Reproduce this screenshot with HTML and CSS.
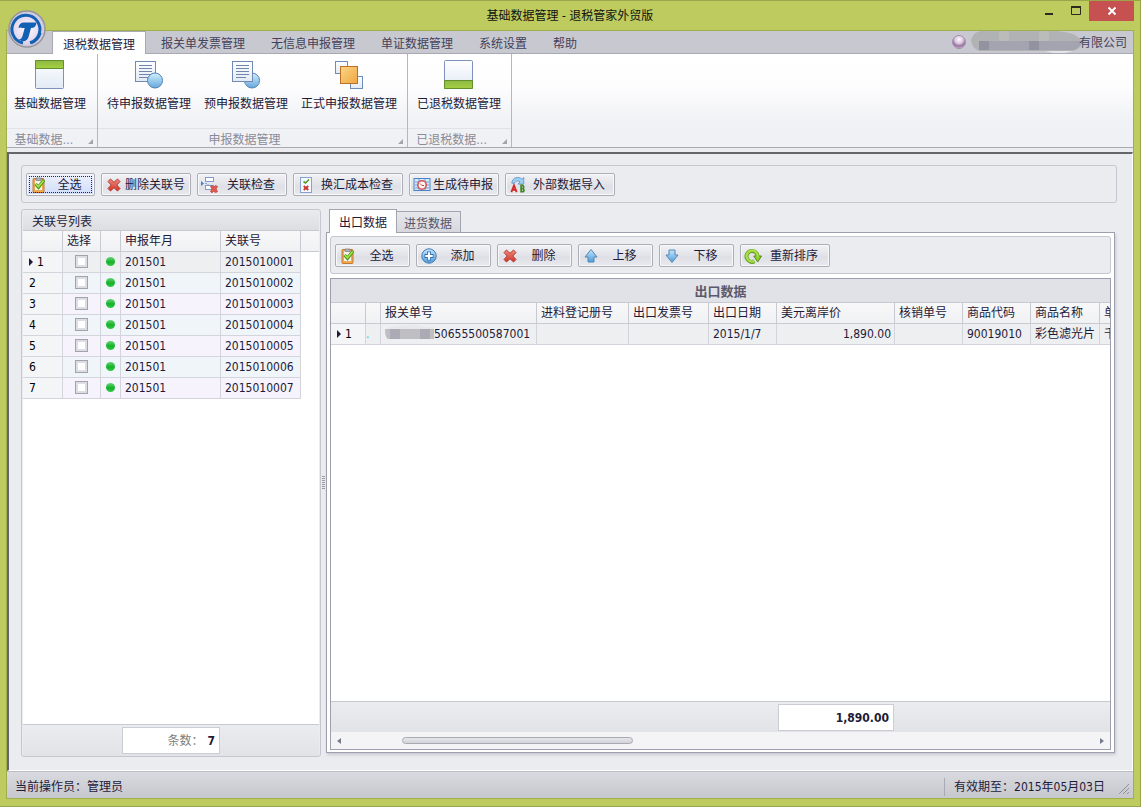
FILE: index.html
```html
<!DOCTYPE html>
<html lang="zh-CN">
<head>
<meta charset="utf-8">
<title>基础数据管理 - 退税管家外贸版</title>
<link rel="stylesheet" href="styles.css">
</head>
<body>
<svg class="sprite" aria-hidden="true">
  <defs>
    <linearGradient id="g-paper" x1="0" y1="0" x2="0" y2="1"><stop offset="0" stop-color="#fdfeff"/><stop offset="1" stop-color="#e3eaf5"/></linearGradient>
    <linearGradient id="g-green" x1="0" y1="0" x2="0" y2="1"><stop offset="0" stop-color="#8eb944"/><stop offset="1" stop-color="#a5d040"/></linearGradient>
    <linearGradient id="g-ball" x1="0" y1="0" x2="0" y2="1"><stop offset="0" stop-color="#d3effc"/><stop offset="1" stop-color="#64a8dc"/></linearGradient>
    <linearGradient id="g-orange" x1="0" y1="0" x2="1" y2="1"><stop offset="0" stop-color="#fbd583"/><stop offset="1" stop-color="#f0a742"/></linearGradient>
    <linearGradient id="g-red" x1="0" y1="0" x2="0" y2="1"><stop offset="0" stop-color="#f08b80"/><stop offset="1" stop-color="#cf3427"/></linearGradient>
    <linearGradient id="g-blue" x1="0" y1="0" x2="0" y2="1"><stop offset="0" stop-color="#c4e6fb"/><stop offset="1" stop-color="#4e9cdc"/></linearGradient>
    <radialGradient id="g-orb" cx=".5" cy=".3" r=".7"><stop offset="0" stop-color="#fffaff"/><stop offset=".45" stop-color="#d8c6de"/><stop offset=".75" stop-color="#93719c"/><stop offset="1" stop-color="#d9bfe0"/></radialGradient>
    <radialGradient id="g-logo"><stop offset="0" stop-color="#fffaff"/><stop offset=".7" stop-color="#e4d9ef"/><stop offset="1" stop-color="#c9c4d8"/></radialGradient>
  </defs>
  <symbol id="i-clip" viewBox="0 0 16 16"><rect x="2" y="1.500" width="11" height="14" rx="1" fill="#f0a850" stroke="#c27a34"/><path d="M4 3h7v10H4z" fill="#f7f3ea"/><path d="M5 1h5v2.500H5z" fill="#b4b5ba" stroke="#77787e" stroke-width=".7"/><path d="M4.500 7l3 3.200L13 3" fill="none" stroke="#3f8f12" stroke-width="3.200"/><path d="M4.800 7.200l2.700 2.600L12.700 3.500" fill="none" stroke="#a6e54c" stroke-width="1.700"/></symbol>
  <symbol id="i-x" viewBox="0 0 16 16"><path d="M2 4.500L4.500 2 8 5.300 11.500 2 14 4.500 10.800 8 14 11.500 11.500 14 8 10.700 4.500 14 2 11.500 5.200 8z" fill="url(#g-red)" stroke="#b63a31" stroke-linejoin="round"/></symbol>
  <symbol id="i-link" viewBox="0 0 18 16"><path d="M0 4l3 2.500L0 9z" fill="#3f82cf"/><path d="M4 6.500h2M7 7v4" fill="none" stroke="#8fa3bf"/><rect x="4.500" y=".5" width="8" height="4" fill="#fff" stroke="#7f9bc7"/><rect x="4.500" y="8.500" width="8" height="4" fill="#fff" stroke="#7f9bc7"/><path d="M9.500 9.500l1.500-1 1.800 1.700 1.700-1.700 2 1-1.500 2.500 1.500 2.500-2 1.300-1.700-1.600-1.800 1.600-1.500-1.300 1.500-2.500z" fill="#e15a52" stroke="#b53a32" stroke-width=".7"/></symbol>
  <symbol id="i-check" viewBox="0 0 16 16"><rect x="2.500" y=".5" width="11" height="15" fill="#f5f9ff" stroke="#88a2d0"/><path d="M5.500 4.500l2 1.500 3.500-3.500" fill="none" stroke="#4f9a1c" stroke-width="1.600"/><path d="M5.700 9l4.600 4M10.300 9l-4.600 4" stroke="#c8342c" stroke-width="1.800"/></symbol>
  <symbol id="i-gen" viewBox="0 0 18 16"><rect x="1" y="1.500" width="16" height="12" fill="#d5e9fb" stroke="#4b83c7"/><path d="M2 5h14M2 8h14M2 11h14M6 2v11M12 2v11" stroke="#6fa3da"/><circle cx="9" cy="8" r="4.200" fill="#fff2f0" stroke="#d35450" stroke-width="1.600"/><path d="M7 6.500l2 2h2" fill="none" stroke="#b94442"/></symbol>
  <symbol id="i-import" viewBox="0 0 18 18"><path d="M2 7C2.500 0 10-1 13.500 2.500L15.500.5V8H9l2.200-2.500C9 3.500 6 4.500 5 7z" fill="#9fd0f3" stroke="#4c87bd" stroke-width=".8"/><path d="M1.500 17L4.500 9.500 7.500 17M3 14.500h3.500" fill="none" stroke="#cf2622" stroke-width="2"/><path d="M12.500 9.500v7h2.500q1.800-1.800-.7-3.500 2.200-1.800 0-3.500z" fill="none" stroke="#3e8420" stroke-width="1.900"/></symbol>
  <symbol id="i-add" viewBox="0 0 16 16"><circle cx="8" cy="8" r="7.200" fill="url(#g-blue)" stroke="#4179b5"/><path d="M8 3.500v9M3.500 8h9" stroke="#3470ad" stroke-width="4"/><path d="M8 4.300v7.400M4.300 8h7.400" stroke="#fff" stroke-width="2.200"/></symbol>
  <symbol id="i-up" viewBox="0 0 16 16"><path d="M8 1.500L14 9h-3v5H5V9H2z" fill="url(#g-blue)" stroke="#5386b7" stroke-linejoin="round"/></symbol>
  <symbol id="i-down" viewBox="0 0 16 16"><path d="M8 14.500L2 7h3V2h6v5h3z" fill="url(#g-blue)" stroke="#5386b7" stroke-linejoin="round"/></symbol>
  <symbol id="i-sort" viewBox="0 0 18 16"><path d="M10.500 13.300A5.500 5.500 0 1 1 13.500 8" fill="none" stroke="#639b1d" stroke-width="4"/><path d="M9.800 8h7.700l-3.800 6z" fill="#8fcd2d" stroke="#568d18"/><path d="M10.300 13.100A5.500 5.500 0 1 1 13.500 9" fill="none" stroke="#a8df48" stroke-width="2.400"/></symbol>
  <symbol id="i-top" viewBox="0 0 32 32"><rect x="1.500" y="1.500" width="28" height="28" rx="1" fill="url(#g-paper)" stroke="#7f92bd"/><path d="M1.500 1.500h28v8h-28z" fill="url(#g-green)" stroke="#62902f"/></symbol>
  <symbol id="i-bottom" viewBox="0 0 32 32"><rect x="1.500" y="1.500" width="28" height="28" rx="1" fill="url(#g-paper)" stroke="#7f92bd"/><path d="M1.500 21.500h28v8h-28z" fill="url(#g-green)" stroke="#62902f"/></symbol>
  <symbol id="i-page" viewBox="0 0 32 32"><rect x="2.500" y="2.500" width="20" height="20" fill="url(#g-paper)" stroke="#7089b5"/><path d="M6 6.500h13M6 9.500h13M6 12.500h13M6 15.500h13M6 18.500h10" stroke="#7185ad"/></symbol>
  <symbol id="i-ball" viewBox="0 0 32 32"><circle cx="22" cy="21.500" r="7.500" fill="url(#g-ball)" stroke="#5182b8"/></symbol>
  <symbol id="i-stack" viewBox="0 0 32 32"><rect x="2.500" y="2.500" width="12" height="12" fill="url(#g-paper)" stroke="#6b8dba"/><rect x="17.500" y="17.500" width="12" height="12" fill="url(#g-paper)" stroke="#6b8dba"/><rect x="7.500" y="7.500" width="17" height="17" fill="url(#g-orange)" stroke="#bd7128"/></symbol>
</svg>

<div class="window">
  <header class="titlebar">
    <h1 class="title">基础数据管理 - 退税管家外贸版</h1>
    <div class="window-controls">
      <button class="ctl" aria-label="最小化"><svg width="12" height="12"><path d="M2 9h8" stroke="#2a2a20" stroke-width="2"/></svg></button>
      <button class="ctl" aria-label="最大化"><svg width="12" height="12"><path d="M1.500 2h9v7.500h-9z" fill="none" stroke="#2a2a20"/><path d="M1 2h10" stroke="#2a2a20" stroke-width="2"/></svg></button>
      <button class="ctl ctl-close" aria-label="关闭"><svg width="12" height="12"><path d="M2.500 2.500l7 7M9.500 2.500l-7 7" stroke="#fff" stroke-width="2"/></svg></button>
    </div>
  </header>

  <div class="client">
    <svg class="logo" viewBox="0 0 40 40" role="img" aria-label="退税管家"><circle cx="20" cy="20" r="18" fill="url(#g-logo)" stroke="#96969c" stroke-width="1.500"/><path d="M16 34A14 14 0 1 1 23 33.700" fill="none" stroke="#1261b2" stroke-width="3"/><path d="M24 34q7-2 9.500-10" fill="none" stroke="#1261b2" stroke-width="2.500"/><path d="M11.500 19q.5-5.500 5.500-5.500h12.500q-.5 5.500-5.500 5.500l-2.500 9q-1.500 5-7 4l-3-1.500q3 0 4-3.500l2.200-8h-2.200q-2-1.200-4 0z" fill="#1261b2"/></svg>
    <nav class="tabs">
      <button class="tab tab-active">退税数据管理</button>
      <button class="tab">报关单发票管理</button>
      <button class="tab">无信息申报管理</button>
      <button class="tab">单证数据管理</button>
      <button class="tab">系统设置</button>
      <button class="tab">帮助</button>
      <div class="account">
        <svg width="14" height="14" viewBox="0 0 14 14"><circle cx="7" cy="7" r="6.500" fill="url(#g-orb)" stroke="#a78cae"/></svg>
        <svg class="redaction" width="112" height="22" viewBox="0 0 112 22"><path d="M0 9Q2 1 10 0h74q24 1 27 12-2 7-11 8H8Q1 17 0 9z" fill="#b1b2b3"/><path d="M8 10h102q0 7-8 9H8z" fill="#a3a4af"/><path d="M8 10h10v9H8zM58 10h10v9H58z" fill="#9193a0"/><path d="M28 0h10v10H28zM68 0h10v10H68z" fill="#bbbcb9"/><path d="M74 20h28l-8 2H82z" fill="#e5e5e8"/></svg>
        <span>有限公司</span>
      </div>
    </nav>

    <div class="ribbon">
      <section class="group group-first">
        <div class="group-items"><button class="big"><svg class="i32"><use href="#i-top"/></svg>基础数据管理</button></div>
        <div class="group-name"><span>基础数据…</span></div>
      </section>
      <section class="group">
        <div class="group-items">
          <button class="big"><svg class="i32"><use href="#i-page"/><use href="#i-ball"/></svg>待申报数据管理</button>
          <button class="big"><svg class="i32"><use href="#i-ball"/><use href="#i-page"/></svg>预申报数据管理</button>
          <button class="big"><svg class="i32"><use href="#i-stack"/></svg>正式申报数据管理</button>
        </div>
        <div class="group-name"><span>申报数据管理</span></div>
      </section>
      <section class="group">
        <div class="group-items"><button class="big"><svg class="i32"><use href="#i-bottom"/></svg>已退税数据管理</button></div>
        <div class="group-name"><span>已退税数据…</span></div>
      </section>
    </div>

    <main class="workspace">
      <div class="toolbar">
        <button class="btn btn-focus w-small"><svg><use href="#i-clip"/></svg><span>全选</span></button>
        <button class="btn w-wide"><svg><use href="#i-x"/></svg><span>删除关联号</span></button>
        <button class="btn w-wide"><svg><use href="#i-link"/></svg><span>关联检查</span></button>
        <button class="btn w-xwide"><svg><use href="#i-check"/></svg><span>换汇成本检查</span></button>
        <button class="btn w-wide"><svg><use href="#i-gen"/></svg><span>生成待申报</span></button>
        <button class="btn w-xwide"><svg><use href="#i-import"/></svg><span>外部数据导入</span></button>
      </div>

      <div class="split">
        <section class="list-panel">
          <h2 class="list-title">关联号列表</h2>
          <div class="list-body">
            <table class="grid list-grid">
              <colgroup><col class="c40"><col class="c38"><col class="c20"><col class="c100"><col class="c80"><col></colgroup>
              <thead><tr><th></th><th>选择</th><th></th><th>申报年月</th><th>关联号</th><th></th></tr></thead>
              <tbody>
                <tr class="current"><td class="num"><i class="arrow"></i>1</td><td class="mid"><input type="checkbox" aria-label="选择 1"></td><td class="mid"><i class="dot"></i></td><td>201501</td><td>2015010001</td><td class="blank"></td></tr>
                <tr><td class="num">2</td><td class="mid"><input type="checkbox" aria-label="选择 2"></td><td class="mid"><i class="dot"></i></td><td>201501</td><td>2015010002</td><td class="blank"></td></tr>
                <tr><td class="num">3</td><td class="mid"><input type="checkbox" aria-label="选择 3"></td><td class="mid"><i class="dot"></i></td><td>201501</td><td>2015010003</td><td class="blank"></td></tr>
                <tr><td class="num">4</td><td class="mid"><input type="checkbox" aria-label="选择 4"></td><td class="mid"><i class="dot"></i></td><td>201501</td><td>2015010004</td><td class="blank"></td></tr>
                <tr><td class="num">5</td><td class="mid"><input type="checkbox" aria-label="选择 5"></td><td class="mid"><i class="dot"></i></td><td>201501</td><td>2015010005</td><td class="blank"></td></tr>
                <tr><td class="num">6</td><td class="mid"><input type="checkbox" aria-label="选择 6"></td><td class="mid"><i class="dot"></i></td><td>201501</td><td>2015010006</td><td class="blank"></td></tr>
                <tr><td class="num">7</td><td class="mid"><input type="checkbox" aria-label="选择 7"></td><td class="mid"><i class="dot"></i></td><td>201501</td><td>2015010007</td><td class="blank"></td></tr>
              </tbody>
            </table>
          </div>
          <div class="list-foot"><div class="sum"><span>条数：</span><b>7</b></div></div>
        </section>

        <div class="splitter"><i></i></div>

        <section class="detail">
          <div class="detail-tabs">
            <button class="dtab dtab-active">出口数据</button>
            <button class="dtab">进货数据</button>
          </div>
          <div class="detail-body">
            <div class="toolbar toolbar-inner">
              <button class="btn w-mid"><svg><use href="#i-clip"/></svg><span>全选</span></button>
              <button class="btn w-mid"><svg><use href="#i-add"/></svg><span>添加</span></button>
              <button class="btn w-mid"><svg><use href="#i-x"/></svg><span>删除</span></button>
              <button class="btn w-mid"><svg><use href="#i-up"/></svg><span>上移</span></button>
              <button class="btn w-mid"><svg><use href="#i-down"/></svg><span>下移</span></button>
              <button class="btn w-wide"><svg><use href="#i-sort"/></svg><span>重新排序</span></button>
            </div>
            <div class="data-panel">
              <h2 class="band">出口数据</h2>
              <div class="data-body">
                <table class="grid data-grid">
                  <colgroup><col class="c35"><col class="c15"><col class="c156"><col class="c92"><col class="c80"><col class="c68"><col class="c118"><col class="c68"><col class="c68"><col class="c69"><col></colgroup>
                  <thead><tr><th></th><th></th><th>报关单号</th><th>进料登记册号</th><th>出口发票号</th><th>出口日期</th><th>美元离岸价</th><th>核销单号</th><th>商品代码</th><th>商品名称</th><th>单</th></tr></thead>
                  <tbody><tr class="current"><td class="num"><i class="arrow"></i>1</td><td class="sliver">.</td><td class="decl"><svg width="49" height="16" viewBox="0 0 49 16"><path d="M1 5Q2 0 30 0l12 2h7v12H6Q0 14 1 5z" fill="#e8e8ea"/><path d="M0 4h49v10H3Q0 13 0 4z" fill="#bfbfc3"/><path d="M5 4h10v10H5zM35 4h10v10H35z" fill="#abaab5"/></svg>50655500587001</td><td></td><td></td><td>2015/1/7</td><td class="amount">1,890.00</td><td></td><td>90019010</td><td>彩色滤光片</td><td>千</td></tr></tbody>
                </table>
              </div>
              <div class="data-foot"><div class="sum sum-amount"><b>1,890.00</b></div></div>
              <div class="scrollbar">
                <button aria-label="向左滚动"><svg width="4" height="8"><path d="M4 1v6L0 4z" fill="#777b8c"/></svg></button>
                <div class="track"><div class="thumb"></div></div>
                <button aria-label="向右滚动"><svg width="4" height="8"><path d="M0 1v6l4-3z" fill="#777b8c"/></svg></button>
              </div>
            </div>
          </div>
        </section>
      </div>
    </main>

    <footer class="status">
      <span>当前操作员：管理员</span>
      <span class="expiry">有效期至：2015年05月03日</span>
      <svg class="grip" width="12" height="12"><path d="M1 11L11 1M5 11l6-6M9 11l2-2" stroke="#8e8f98"/></svg>
    </footer>
  </div>
</div>
</body>
</html>
```
FILE: styles.css
```css
* { box-sizing: border-box; }
body {
  margin: 0;
  font: 12px/18px "DejaVu Sans Condensed", "Noto Sans", "Noto Sans CJK SC", sans-serif;
  color: #1e1b39;
}
button { font: inherit; color: inherit; padding: 0; margin: 0; border: 0; background: none; white-space: nowrap; }
h1, h2 { margin: 0; font-size: 12px; font-weight: normal; }
svg { display: block; flex: none; }
.sprite { position: absolute; width: 0; height: 0; }

.window {
  display: flex;
  flex-direction: column;
  height: 100vh;
  min-height: 500px;
  padding: 0 6px 7px;
  background: #bdcb5f;
  border-top: 1px solid #98a548;
  border-right: 1px solid #98a548;
  border-bottom: 1px solid #98a548;
}
.titlebar { display: grid; grid-template-columns: 1fr auto 1fr; height: 29px; flex: none; }
.title { grid-column: 2; padding-top: 6px; color: #111; }
.window-controls { display: flex; justify-content: flex-end; align-items: flex-start; }
.ctl { display: flex; justify-content: center; align-items: center; width: 27px; height: 20px; }
.ctl-close { width: 45px; background: #c75050; }

.client {
  position: relative;
  display: flex;
  flex-direction: column;
  flex: 1;
  min-height: 0;
  border: 1px solid #a1ae4f;
  background: #ebecf0;
}
.logo { position: absolute; left: 0; top: -22px; width: 40px; height: 40px; z-index: 2; }
.tabs { display: flex; align-items: flex-end; height: 23px; flex: none; padding-left: 45px; background: #c8c8d1; border-bottom: 1px solid #a9a9b4; }
.tab { height: 22px; padding: 4px 13px 0; color: #43425a; line-height: 18px; }
.tab-active { height: 23px; margin: 0 2px -1px 0; padding: 3px 10px 0; background: #fff; color: #1e1b39; border: 1px solid #a9a9b4; border-bottom: 0; }
.account { display: flex; align-items: center; height: 22px; margin-left: auto; padding-right: 6px; color: #43425a; }
.account span { padding-top: 2px; }
.redaction { margin-left: 5px; margin-right: -4px; }

.ribbon { display: flex; height: 94px; flex: none; background: linear-gradient(#fff, #fdfdfe 35%, #f1f2f5 70%, #f0f1f4); border-bottom: 1px solid #a9a9b4; }
.group { display: flex; flex-direction: column; border-right: 1px solid #b5b6be; }
.group-items { display: flex; gap: 13px; flex: 1; padding: 5px 10px 0 9px; }
.group-first .group-items { padding: 5px 11px 0 7px; }
.big { display: flex; flex-direction: column; align-items: center; align-self: flex-start; }
.i32 { width: 32px; height: 32px; margin-bottom: 4px; }
.group-name { position: relative; height: 19px; padding: 2px 22px 0 6px; color: #8b8b98; border-top: 1px solid #e1e2e7; text-align: center; }
.group-name::after { content: ""; position: absolute; right: 4px; bottom: 3px; border: solid #a2a3ad; border-width: 0 0 5px 5px; border-left-color: transparent; }

.workspace {
  display: flex;
  flex-direction: column;
  flex: 1;
  min-height: 0;
  margin-top: 4px;
  padding: 11px 15px 13px 12px;
  border: solid #65666b;
  border-width: 2px 0 0 2px;
  border-right: 1px solid #fff;
  border-bottom: 1px solid #fff;
}
.toolbar { display: flex; align-items: flex-start; gap: 6px; height: 38px; flex: none; padding: 7px 4px; border: 1px solid #c5c6cf; border-radius: 3px; background: #ebecf0; }
.btn { display: flex; align-items: center; height: 23px; padding: 0 3px; border: 1px solid #adaeb8; border-radius: 2px; background: linear-gradient(#f2f2f5, #dfe0e6 60%, #e9eaee); box-shadow: inset 0 0 0 1px #f8f8fa; }
.btn svg { width: 18px; height: 16px; }
.btn span { flex: 1; text-align: center; }
.btn-focus { background: linear-gradient(#edf1fc, #cfdcf9); outline: 1px dotted #22264a; outline-offset: -4px; }
.w-small { width: 69px; }
.w-mid { width: 75px; }
.w-wide { width: 90px; }
.w-xwide { width: 110px; }

.split { display: flex; flex: 1; min-height: 0; margin-top: 6px; }
.list-panel { display: flex; flex-direction: column; width: 300px; flex: none; border: 1px solid #c5c6cf; border-radius: 3px; background: #ebecf0; padding: 0 1px; }
.list-title { height: 21px; padding: 3px 9px 0; background: linear-gradient(#eaebef, #dddee2); border-bottom: 1px solid #c8c9d0; }
.list-body { flex: 1; min-height: 0; overflow: hidden; background: #fff; }
.list-foot { display: flex; height: 32px; padding: 2px 0 0 99px; border-top: 1px solid #c8c9d0; background: linear-gradient(#ebecef, #e2e3e7); }
.sum { display: flex; justify-content: flex-end; align-items: center; gap: 4px; width: 98px; height: 27px; padding: 0 4px; background: #fff; border: 1px solid #ccccd4; color: #808080; }
.sum b { color: #1e1b39; font-size: 12px; }

.grid { table-layout: fixed; border-collapse: separate; border-spacing: 0; }
.grid th, .grid td { height: 21px; padding: 0 4px; border-right: 1px solid #d3d4dc; border-bottom: 1px solid #d3d4dc; text-align: left; font-weight: normal; line-height: 18px; white-space: nowrap; overflow: hidden; }
.grid th { background: linear-gradient(#f8f8f9, #f0f1f3); border-color: #c8c9d1; }
.list-grid { width: 100%; }
.list-grid th:last-child { border-right: 0; }
.grid td { background: #f0f5fa; }
.grid tr:nth-child(odd) td { background: #f6f3fd; }
.grid .current td, .grid tr.current:nth-child(odd) td { background: #eeeff1; }
.grid tr td.blank, .grid tr:nth-child(odd) td.blank, .grid tr.current:nth-child(odd) td.blank { background: #fff; border: 0; }
.grid tr td.num, .grid tr:nth-child(odd) td.num, .grid tr.current:nth-child(odd) td.num { background: #f4f5f6; padding-left: 6px; color: #000; }
.grid .mid { padding: 0 0 1px; text-align: center; }
.arrow { display: inline-block; margin-right: 4px; border: 4px solid transparent; border-left-color: #1e1b39; border-right: 0; }
.dot { display: block; width: 9px; height: 9px; margin: 0 auto; border-radius: 50%; background: linear-gradient(#65d673, #17b02b 55%, #31cb42); }
.grid input { appearance: none; display: block; width: 13px; height: 13px; margin: 0 auto; border: 1px solid #a0a2ae; background: #fff; box-shadow: inset 0 0 0 2px #dddee3; }
.c15 { width: 15px; } .c20 { width: 20px; } .c35 { width: 35px; } .c38 { width: 38px; } .c40 { width: 40px; }
.c68 { width: 68px; } .c69 { width: 69px; } .c80 { width: 80px; } .c92 { width: 92px; } .c100 { width: 100px; }
.c118 { width: 118px; } .c156 { width: 156px; }

.splitter { display: flex; align-items: center; justify-content: center; width: 5px; flex: none; }
.splitter i { width: 3px; height: 14px; background: repeating-linear-gradient(#9a9ba6 0 1px, transparent 1px 2px); }

.detail { display: flex; flex-direction: column; flex: 1; min-width: 0; margin-bottom: 4px; margin-right: 2px; }
.detail-tabs { display: flex; align-items: flex-end; height: 23px; flex: none; padding-left: 3px; }
.dtab { height: 21px; padding: 3px 8px 0 7px; border: 1px solid #a3a4b0; border-left: 0; border-bottom: 0; background: linear-gradient(#e6e7eb, #d8d9df); color: #55546a; line-height: 18px; }
.dtab-active { position: relative; height: 24px; margin-bottom: -1px; padding: 2px 9px 0; border-left: 1px solid #a3a4b0; background: #fff; color: #1e1b39; }
.detail-body { display: flex; flex-direction: column; flex: 1; min-height: 0; padding: 3px 3px 2px; border: 1px solid #9d9faf; background: #fff; box-shadow: 1px 2px 3px #c9cad0; }
.data-panel { display: flex; flex-direction: column; flex: 1; min-height: 0; margin-top: 4px; border: 1px solid #9d9faf; background: #fff; }
.band { height: 24px; padding-top: 4px; background: #e1e2e7; border-bottom: 1px solid #c8c9d1; color: #5b5a6c; font-size: 13px; font-weight: bold; text-align: center; }
.data-body { flex: 1; min-height: 0; overflow: hidden; }
.data-grid { width: 100%; }
.data-grid th:last-child, .data-grid td:last-child { padding-right: 0; border-right: 0; }
.grid td.amount { text-align: right; padding-right: 3px; }
.grid td.sliver { padding: 0; color: #35bcc9; }
.decl svg { display: inline-block; vertical-align: middle; margin-bottom: 2px; }
.data-foot { height: 31px; flex: none; padding: 2px 0 0 447px; border-top: 1px solid #c8c9d0; background: linear-gradient(#ebecef, #e2e3e7); }
.sum-amount { width: 116px; }
.scrollbar { display: flex; align-items: center; height: 17px; flex: none; padding: 0 6px; background: #f4f4f7; }
.track { flex: 1; padding-left: 61px; padding-right: 20px; }
.thumb { width: 34%; height: 7px; border: 1px solid #a9aab3; border-radius: 4px; background: linear-gradient(#e7e7eb, #d2d3d8); }

.status { display: flex; align-items: center; height: 27px; flex: none; padding: 4px 3px 0 8px; border-top: 1px solid #bcbdc9; background: linear-gradient(#d9dae0, #c7c8ce); }
.expiry { margin-left: auto; padding: 0 13px 0 9px; border-left: 1px solid #a9aab3; }
.grip { align-self: flex-end; margin-bottom: 3px; }
```
